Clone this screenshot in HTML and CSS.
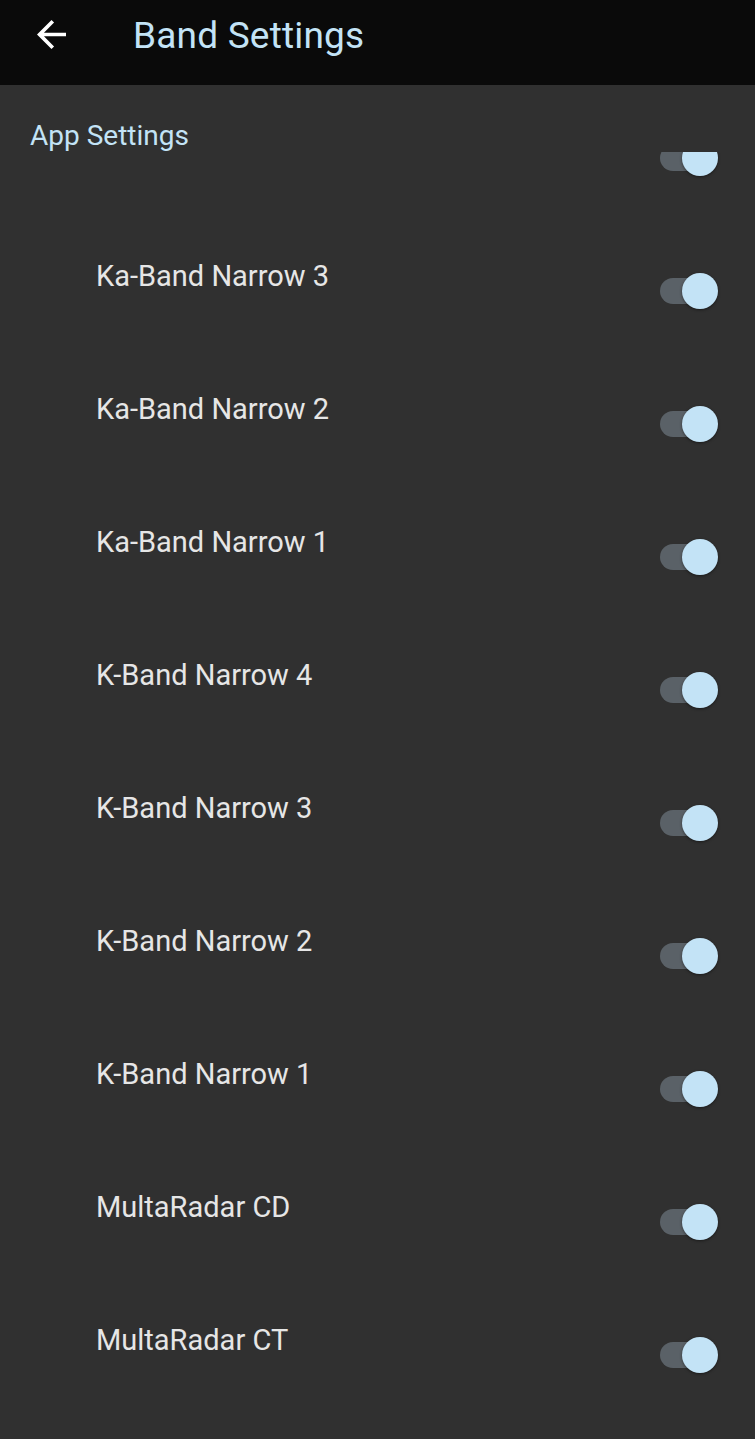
FILE: index.html
```html
<!DOCTYPE html>
<html>
<head>
<meta charset="utf-8">
<link rel="stylesheet" href="styles.css">
</head>
<body>
<header class="appbar">
  <svg class="back" viewBox="4 4 16 16"><path d="M20 11H7.83l5.59-5.59L12 4l-8 8 8 8 1.41-1.41L7.83 13H20v-2z" fill="#ffffff"/></svg>
  <div class="title">Band Settings</div>
</header>
<main class="content">
  <div class="category">App Settings</div>
  <div class="list">
    <div class="row first"><div class="label"></div><div class="switch"><span class="track"></span><span class="thumb"></span></div></div>
    <div class="row"><div class="label">Ka-Band Narrow 3</div><div class="switch"><span class="track"></span><span class="thumb"></span></div></div>
    <div class="row"><div class="label">Ka-Band Narrow 2</div><div class="switch"><span class="track"></span><span class="thumb"></span></div></div>
    <div class="row"><div class="label">Ka-Band Narrow 1</div><div class="switch"><span class="track"></span><span class="thumb"></span></div></div>
    <div class="row"><div class="label">K-Band Narrow 4</div><div class="switch"><span class="track"></span><span class="thumb"></span></div></div>
    <div class="row"><div class="label">K-Band Narrow 3</div><div class="switch"><span class="track"></span><span class="thumb"></span></div></div>
    <div class="row"><div class="label">K-Band Narrow 2</div><div class="switch"><span class="track"></span><span class="thumb"></span></div></div>
    <div class="row"><div class="label">K-Band Narrow 1</div><div class="switch"><span class="track"></span><span class="thumb"></span></div></div>
    <div class="row"><div class="label">MultaRadar CD</div><div class="switch"><span class="track"></span><span class="thumb"></span></div></div>
    <div class="row"><div class="label">MultaRadar CT</div><div class="switch"><span class="track"></span><span class="thumb"></span></div></div>
  </div>
</main>
</body>
</html>
```
FILE: styles.css
```css
* { box-sizing: border-box; }
html, body { margin: 0; padding: 0; }
body {
  width: 755px;
  height: 1439px;
  overflow: hidden;
  background: #303030;
  font-family: Roboto, "Liberation Sans", sans-serif;
}
.appbar {
  height: 85px;
  background: #0a0a0a;
  display: flex;
  align-items: flex-start;
}
.back {
  width: 29px;
  height: 29px;
  margin: 20px 0 0 37px;
  flex: none;
}
.title {
  margin: 18px 0 0 67px;
  font-size: 37px;
  line-height: 36px;
  color: #c3e3f6;
  letter-spacing: 0.2px;
}
.content {
  background: #303030;
}
.category {
  height: 67px;
  padding: 37px 0 0 30px;
  font-size: 28px;
  line-height: 27px;
  color: #c3e3f6;
}
.list {
  overflow: hidden;
  height: 1287px;
}
.row {
  height: 133px;
  display: flex;
  align-items: flex-start;
  justify-content: space-between;
  padding: 0 37px 0 96px;
}
.row.first {
  margin-top: -74px;
}
.label {
  margin-top: 51px;
  font-size: 29px;
  line-height: 28px;
  color: #e6e6e6;
}
.switch {
  position: relative;
  width: 58px;
  height: 36px;
  margin-top: 62px;
  flex: none;
}
.track {
  position: absolute;
  left: 0;
  top: 5px;
  width: 54px;
  height: 26px;
  border-radius: 13px;
  background: #5a6167;
}
.thumb {
  position: absolute;
  right: 0;
  top: 0;
  width: 36px;
  height: 36px;
  border-radius: 50%;
  background: #c3e3f6;
  box-shadow: 0 1px 3px rgba(0,0,0,0.45);
}
```
